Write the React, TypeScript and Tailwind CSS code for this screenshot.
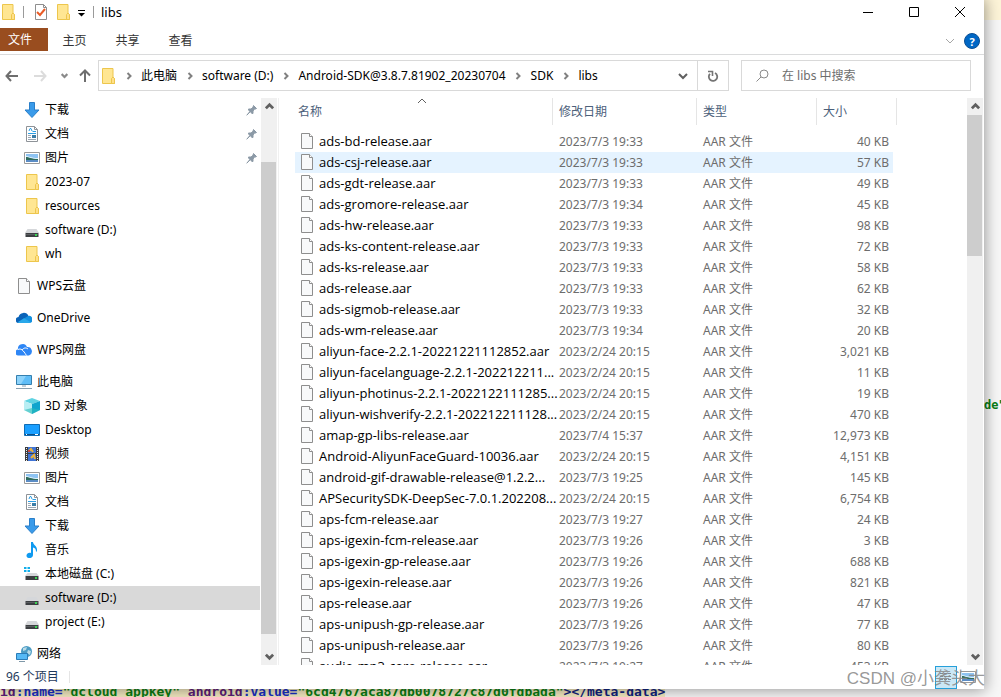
import type { ReactNode } from 'react';

const FolderIcon = () => (
  <svg width="16" height="16" viewBox="0 0 16 16" className="shrink-0" aria-hidden="true">
    <path d="M2.5 .5H13V9l1.5 1.5v5H2.5z" fill="#ffe692" stroke="#edc64c" />
    <path d="M11.5 15.5v-5l1.5-1.5 1.5 1.5v5z" fill="#ffe08a" stroke="#edc64c" />
  </svg>
);

const FileIcon = () => (
  <svg width="16" height="16" viewBox="0 0 16 16" className="shrink-0" aria-hidden="true">
    <path d="M2.5 .5h8l3 3v12h-11z" fill="#f8f9fa" stroke="#8e8e8e" />
    <path d="M10.5 .5v3h3" fill="#fff" stroke="#8e8e8e" />
  </svg>
);

const DocumentIcon = () => (
  <svg width="16" height="16" viewBox="0 0 16 16" className="shrink-0" aria-hidden="true">
    <path d="M2.5 .5h8l3 3v12h-11z" fill="#fff" stroke="#8e9398" />
    <path d="M10.5 .5v3h3" fill="none" stroke="#8e9398" />
    <path d="M5 5l1-2.5h1L8 5M8.5 5.500H12M4 7.500h8" fill="none" stroke="#2d9fe5" />
    <path d="M4 9.500h3M4 11.500h3M4 13.500h8" stroke="#9aa7b4" />
    <path d="M8 9h4v3H8z" fill="#3b7ea8" />
  </svg>
);

const DownloadIcon = () => (
  <svg width="16" height="16" viewBox="0 0 16 16" className="shrink-0" aria-hidden="true">
    <path d="M5.500 .5h5v7.500h4.500L8 15.500 1 8h4.500z" fill="#3a9bea" stroke="#2a7fc9" />
  </svg>
);

const PictureIcon = () => (
  <svg width="16" height="16" viewBox="0 0 16 16" className="shrink-0" aria-hidden="true">
    <path d="M.5 2.500h15v11H.5z" fill="#fff" stroke="#9a9a9a" />
    <path d="M2 4h12v4H2z" fill="#8ec3f2" />
    <path d="M2 6c3 0 5 2 12 2v1H2z" fill="#dceffb" />
    <path d="M2 7c3 0 5 2 12 2v1H2z" fill="#2f6b5c" />
    <path d="M2 10h12v2H2z" fill="#5b8cc4" />
  </svg>
);

const DriveIcon = () => (
  <svg width="16" height="16" viewBox="0 0 16 16" className="shrink-0" aria-hidden="true">
    <path d="M3.500 7h9L15 11H1z" fill="#d5d7da" />
    <path d="M1.500 11h13v4h-13z" fill="#3c3f42" />
    <path d="M2 12h12v1H2z" fill="#5a5d60" />
    <path d="M11 12h2v2h-2z" fill="#39d353" />
  </svg>
);

const SystemDriveIcon = () => (
  <svg width="16" height="16" viewBox="0 0 16 16" className="shrink-0" aria-hidden="true">
    <path d="M0 1h2.500v2H0zM3.500 1H6v2H3.500zM0 4h2.500v2H0zM3.500 4H6v2H3.500z" fill="#12aeea" />
    <path d="M3.500 7h9L15 10H1z" fill="#d5d7da" />
    <path d="M1.500 10h13v4h-13z" fill="#3c3f42" />
    <path d="M11 11h2v2h-2z" fill="#39d353" />
  </svg>
);

const OneDriveIcon = () => (
  <svg width="16" height="16" viewBox="0 0 16 16" className="shrink-0" aria-hidden="true">
    <path d="M3 13a3 3 0 0 1-.5-6A5.300 5.300 0 0 1 12.500 6L8 13z" fill="#0a63b8" />
    <path d="M8 8.500L12 6a3.500 3.500 0 0 1 2 6.800H3.500z" fill="#1490df" />
    <path d="M1.500 12.300L8 8.300l7 4-1 .7H3z" fill="#29a8ea" />
  </svg>
);

const WpsCloudIcon = () => (
  <svg width="16" height="16" viewBox="0 0 16 16" className="shrink-0" aria-hidden="true">
    <path d="M3 13.500A3 3 0 0 1 2 7.500 4.700 4.700 0 0 1 11 5a4.400 4.400 0 0 1 2 8.500z" fill="#2e86f5" />
    <path d="M2 7.500C5 6 7 8 10.500 13.500M6 8c2-2.500 4-2.500 6-1" fill="none" stroke="#fff" />
  </svg>
);

const ComputerIcon = () => (
  <svg width="16" height="16" viewBox="0 0 16 16" className="shrink-0" aria-hidden="true">
    <path d="M.5 1.500h15v9H.5z" fill="#5fbdf7" stroke="#357fae" />
    <path d="M1 2h9l-5 8H1z" fill="#8dd3fb" />
    <path d="M6 12h4M0 14.500h16" stroke="#8aa0b0" />
  </svg>
);

const CubeIcon = () => (
  <svg width="16" height="16" viewBox="0 0 16 16" className="shrink-0" aria-hidden="true">
    <path d="M8 0l8 3-8 3-8-3z" fill="#5fd3e2" />
    <path d="M0 3l8 3v10l-8-4z" fill="#b9eef3" />
    <path d="M16 3L8 6v10l8-4z" fill="#10a5cd" />
    <path d="M8 10l8 2-8 4-8-4z" fill="#2bbcbb" opacity=".6" />
  </svg>
);

const DesktopIcon = () => (
  <svg width="16" height="16" viewBox="0 0 16 16" className="shrink-0" aria-hidden="true">
    <path d="M.5 2.500h15v11H.5z" fill="#1a9fff" stroke="#0f6db5" />
    <path d="M1 12.500h14" stroke="#0b4f88" />
    <path d="M2 12.500h1M11 12.500h3" stroke="#fff" />
  </svg>
);

const VideoIcon = () => (
  <svg width="16" height="16" viewBox="0 0 16 16" className="shrink-0" aria-hidden="true">
    <path d="M1 1h14v14H1z" fill="#3d3d3d" />
    <path d="M4 1h8v6H4zM4 8h8v7H4z" fill="#3f74d6" />
    <path d="M2.500 2v13M13.500 2v13" stroke="#eee" strokeDasharray="1 1" />
    <path d="M5 5l2-2 2 3M7 12l3-3 1 4" fill="none" stroke="#e9b23c" strokeWidth="2" />
    <path d="M4 4h2v2H4z" fill="#c5473f" />
  </svg>
);

const MusicIcon = () => (
  <svg width="16" height="16" viewBox="0 0 16 16" className="shrink-0" aria-hidden="true">
    <path d="M7 0h2c0 3 4.500 4 4 8.500-.3 1-1 1.500-1 1.500 0-3-1-4-3-4.500V13c0 4-7 4-6.500.5C2.800 11 5 10.300 7 11z" fill="#0f9af0" />
  </svg>
);

const NetworkIcon = () => (
  <svg width="16" height="16" viewBox="0 0 16 16" className="shrink-0" aria-hidden="true">
    <circle cx="10.500" cy="5.500" r="5.500" fill="#4c9cc4" />
    <path d="M7 2l4-1-1 3-3 1zM12 4l3 1-1 4-3-2z" fill="#b9dbe8" />
    <path d="M.5 7.500h11v6H.5z" fill="#55b9f5" stroke="#2a7cb8" />
    <path d="M3 15.500h6" stroke="#7f98a8" />
  </svg>
);

const PinIcon = () => (
  <svg width="12" height="12" viewBox="0 0 12 12" className="mr-0.5 ml-auto shrink-0" aria-hidden="true">
    <path d="M7.500 1.500l3 3-1 .5-.8-.2L7 7v2l-.5 1L4.300 7.700.8 11.200 4 7.400 2 5.500l1-.5h2l2-1.700z" fill="#8b99a6" stroke="#8b99a6" />
  </svg>
);

type ChevronProps = { dir: 'up' | 'down' | 'right'; size?: number; color?: string; weight?: number };

const chevronPaths = {
  up: 'M1 7l4-4 4 4',
  down: 'M1 3l4 4 4-4',
  right: 'M3.500 2l3 3-3 3',
};

const Chevron = ({ dir, size = 10, color = '#606060', weight = 2 }: ChevronProps) => (
  <svg width={size} height={size} viewBox="0 0 10 10" className="shrink-0" aria-hidden="true">
    <path d={chevronPaths[dir]} fill="none" stroke={color} strokeWidth={weight} />
  </svg>
);

type NavItem = { name: string; icon: ReactNode; level?: number; pinned?: boolean; selected?: boolean };

const navGroups: NavItem[][] = [
  [
    { name: '下载', icon: <DownloadIcon />, level: 1, pinned: true },
    { name: '文档', icon: <DocumentIcon />, level: 1, pinned: true },
    { name: '图片', icon: <PictureIcon />, level: 1, pinned: true },
    { name: '2023-07', icon: <FolderIcon />, level: 1 },
    { name: 'resources', icon: <FolderIcon />, level: 1 },
    { name: 'software (D:)', icon: <DriveIcon />, level: 1 },
    { name: 'wh', icon: <FolderIcon />, level: 1 },
  ],
  [{ name: 'WPS云盘', icon: <FileIcon /> }],
  [{ name: 'OneDrive', icon: <OneDriveIcon /> }],
  [{ name: 'WPS网盘', icon: <WpsCloudIcon /> }],
  [
    { name: '此电脑', icon: <ComputerIcon /> },
    { name: '3D 对象', icon: <CubeIcon />, level: 1 },
    { name: 'Desktop', icon: <DesktopIcon />, level: 1 },
    { name: '视频', icon: <VideoIcon />, level: 1 },
    { name: '图片', icon: <PictureIcon />, level: 1 },
    { name: '文档', icon: <DocumentIcon />, level: 1 },
    { name: '下载', icon: <DownloadIcon />, level: 1 },
    { name: '音乐', icon: <MusicIcon />, level: 1 },
    { name: '本地磁盘 (C:)', icon: <SystemDriveIcon />, level: 1 },
    { name: 'software (D:)', icon: <DriveIcon />, level: 1, selected: true },
    { name: 'project (E:)', icon: <DriveIcon />, level: 1 },
  ],
  [{ name: '网络', icon: <NetworkIcon /> }],
];

const files = [
  { name: 'ads-bd-release.aar', date: '2023/7/3 19:33', size: '40 KB' },
  { name: 'ads-csj-release.aar', date: '2023/7/3 19:33', size: '57 KB', hovered: true },
  { name: 'ads-gdt-release.aar', date: '2023/7/3 19:33', size: '49 KB' },
  { name: 'ads-gromore-release.aar', date: '2023/7/3 19:34', size: '45 KB' },
  { name: 'ads-hw-release.aar', date: '2023/7/3 19:33', size: '98 KB' },
  { name: 'ads-ks-content-release.aar', date: '2023/7/3 19:33', size: '72 KB' },
  { name: 'ads-ks-release.aar', date: '2023/7/3 19:33', size: '58 KB' },
  { name: 'ads-release.aar', date: '2023/7/3 19:33', size: '62 KB' },
  { name: 'ads-sigmob-release.aar', date: '2023/7/3 19:33', size: '32 KB' },
  { name: 'ads-wm-release.aar', date: '2023/7/3 19:34', size: '20 KB' },
  { name: 'aliyun-face-2.2.1-20221221112852.aar', date: '2023/2/24 20:15', size: '3,021 KB' },
  { name: 'aliyun-facelanguage-2.2.1-202212211...', date: '2023/2/24 20:15', size: '11 KB' },
  { name: 'aliyun-photinus-2.2.1-2022122111285...', date: '2023/2/24 20:15', size: '19 KB' },
  { name: 'aliyun-wishverify-2.2.1-202212211128...', date: '2023/2/24 20:15', size: '470 KB' },
  { name: 'amap-gp-libs-release.aar', date: '2023/7/4 15:37', size: '12,973 KB' },
  { name: 'Android-AliyunFaceGuard-10036.aar', date: '2023/2/24 20:15', size: '4,151 KB' },
  { name: 'android-gif-drawable-release@1.2.2...', date: '2023/7/3 19:25', size: '145 KB' },
  { name: 'APSecuritySDK-DeepSec-7.0.1.202208...', date: '2023/2/24 20:15', size: '6,754 KB' },
  { name: 'aps-fcm-release.aar', date: '2023/7/3 19:27', size: '24 KB' },
  { name: 'aps-igexin-fcm-release.aar', date: '2023/7/3 19:26', size: '3 KB' },
  { name: 'aps-igexin-gp-release.aar', date: '2023/7/3 19:26', size: '688 KB' },
  { name: 'aps-igexin-release.aar', date: '2023/7/3 19:26', size: '821 KB' },
  { name: 'aps-release.aar', date: '2023/7/3 19:26', size: '47 KB' },
  { name: 'aps-unipush-gp-release.aar', date: '2023/7/3 19:26', size: '77 KB' },
  { name: 'aps-unipush-release.aar', date: '2023/7/3 19:26', size: '80 KB' },
  { name: 'audio-mp3-core-release.aar', date: '2023/7/3 19:27', size: '453 KB' },
];

const crumbs = ['此电脑', 'software (D:)', 'Android-SDK@3.8.7.81902_20230704', 'SDK', 'libs'];

const TitleBar = () => (
  <header className="flex h-7 shrink-0 items-start justify-between pr-px">
    <div className="flex h-6 items-center">
      <FolderIcon />
      <span className="ml-[7px] h-3 w-px bg-[#9a9a9a]" />
      <button aria-label="属性" className="ml-2">
        <svg width="16" height="16" viewBox="0 0 16 16" aria-hidden="true">
          <path d="M3.500 .5h8l3 3v12h-11z" fill="#fff" stroke="#8e8e8e" />
          <path d="M11.500 .5v3h3" fill="none" stroke="#8e8e8e" />
          <path d="M5 8l3 3 5-6" fill="none" stroke="#ea5b26" strokeWidth="2" />
        </svg>
      </button>
      <button aria-label="新建文件夹" className="ml-[7px]">
        <FolderIcon />
      </button>
      <button aria-label="自定义快速访问工具栏" className="ml-1">
        <svg width="12" height="12" viewBox="0 0 12 12" aria-hidden="true">
          <path d="M3 4.500h7" stroke="#000" />
          <path d="M3 7h7L6.500 10.500z" fill="#000" />
        </svg>
      </button>
      <span className="ml-[6px] h-3 w-px bg-[#9a9a9a]" />
      <h1 className="ml-[7px] text-[13px] leading-none">libs</h1>
    </div>
    <div className="flex h-6">
      <button aria-label="最小化" className="flex w-[46px] items-center justify-center">
        <svg width="10" height="10" viewBox="0 0 10 10"><path d="M0 5.500h10" stroke="#000" /></svg>
      </button>
      <button aria-label="最大化" className="flex w-[46px] items-center justify-center">
        <svg width="10" height="10" viewBox="0 0 10 10"><path d="M.5 .5h9v9h-9z" fill="none" stroke="#000" /></svg>
      </button>
      <button aria-label="关闭" className="flex w-[46px] items-center justify-center">
        <svg width="10" height="10" viewBox="0 0 10 10"><path d="M0 0l10 10M10 0L0 10" stroke="#000" /></svg>
      </button>
    </div>
  </header>
);

const Ribbon = () => (
  <div className="flex h-[27px] shrink-0 items-start border-b border-[#dadbdc]">
    <button className="h-[23px] w-12 bg-[#994d1f] pr-2 text-white">文件</button>
    {['主页', '共享', '查看'].map((tab) => (
      <button key={tab} className="h-[25px] w-[53px] text-[#333]">
        {tab}
      </button>
    ))}
    <div className="ml-auto flex h-[26px] items-center gap-[9px] pr-1">
      <button aria-label="展开功能区">
        <Chevron dir="down" color="#a6a6a6" weight={1} />
      </button>
      <button
        aria-label="帮助"
        className="flex size-4 items-center justify-center rounded-full border border-[#0b4f94] bg-[#0067c5] text-[11px] leading-none font-bold text-white"
      >
        ?
      </button>
    </div>
  </div>
);

const AddressBar = () => (
  <div className="mt-[5px] flex h-[31px] shrink-0 items-center pr-[13px]">
    <div className="flex w-[98px] items-center">
      <button aria-label="后退" className="ml-[5px]">
        <svg width="13" height="12" viewBox="0 0 13 12"><path d="M13 6H1.500M6 1L1.500 6 6 11" fill="none" stroke="#6e6e6e" strokeWidth="2" /></svg>
      </button>
      <button aria-label="前进" className="ml-4">
        <svg width="13" height="12" viewBox="0 0 13 12"><path d="M0 6h11.500M7 1l4.500 5L7 11" fill="none" stroke="#dcdcdc" strokeWidth="2" /></svg>
      </button>
      <button aria-label="最近浏览的位置" className="ml-[14px]">
        <Chevron dir="down" size={7} color="#8a8a8a" weight={3} />
      </button>
      <button aria-label="上移" className="ml-[11px]">
        <svg width="12" height="13" viewBox="0 0 12 13"><path d="M6 13V1.500M1 6.500l5-5 5 5" fill="none" stroke="#6e6e6e" strokeWidth="2" /></svg>
      </button>
    </div>
    <nav className="flex h-full min-w-0 flex-1 items-center border border-[#d9d9d9] pl-px" aria-label="地址">
      <FolderIcon />
      {crumbs.map((crumb) => (
        <span key={crumb} className="flex items-center whitespace-nowrap">
          <span className="flex w-[25px] justify-center">
            <Chevron dir="right" color="#808080" />
          </span>
          <a href="#">{crumb}</a>
        </span>
      ))}
      <button aria-label="以前的位置" className="ml-auto flex h-full w-[29px] items-center justify-center">
        <Chevron dir="down" />
      </button>
      <button
        aria-label="刷新"
        className="flex h-full w-[31px] items-center justify-center border-l border-[#d9d9d9]"
      >
        <svg width="12" height="12" viewBox="0 0 12 12" aria-hidden="true">
          <path d="M3 3.800A4.200 4.200 0 1 0 8 3" fill="none" stroke="#757575" strokeWidth="1.800" />
          <path d="M1 1.500h4.500V6" fill="none" stroke="#757575" strokeWidth="1.600" />
        </svg>
      </button>
    </nav>
    <label className="ml-3 flex h-full w-[230px] items-center border border-[#d9d9d9] pl-[14px]">
      <svg width="13" height="13" viewBox="0 0 13 13" className="shrink-0" aria-hidden="true">
        <circle cx="8" cy="5" r="4" fill="none" stroke="#8a8a8a" />
        <path d="M5 8l-4.500 4.500" stroke="#8a8a8a" />
      </svg>
      <input
        type="text"
        aria-label="搜索"
        placeholder="在 libs 中搜索"
        className="ml-[13px] w-full min-w-0 outline-none placeholder:text-[#6d6d6d]"
      />
    </label>
  </div>
);

const NavPane = () => (
  <nav className="w-[261px] shrink-0 overflow-hidden" aria-label="导航窗格">
    <ul className="flex flex-col gap-2">
      {navGroups.map((group, i) => (
        <li key={i}>
          <ul>
            {group.map((item) => (
              <li key={item.name} className={`mr-px h-6 ${item.selected ? 'bg-[#d9d9d9]' : ''}`}>
                <a href="#" className={`flex h-full items-center gap-[5px] ${item.level ? 'pl-6' : 'pl-4'}`}>
                  {item.icon}
                  <span>{item.name}</span>
                  {item.pinned && <PinIcon />}
                </a>
              </li>
            ))}
          </ul>
        </li>
      ))}
    </ul>
  </nav>
);

const ScrollBar = ({ offset, thumb }: { offset: number; thumb: number }) => (
  <div className="flex w-4 shrink-0 flex-col items-stretch bg-[#f0f0f0]">
    <button aria-label="向上滚动" className="flex h-[17px] shrink-0 items-center justify-center">
      <Chevron dir="up" size={9} weight={3} />
    </button>
    <div className="flex-1 pr-px">
      <div className="bg-[#cdcdcd]" style={{ marginTop: offset, height: thumb }} />
    </div>
    <button aria-label="向下滚动" className="flex h-[17px] shrink-0 items-center justify-center">
      <Chevron dir="down" size={9} weight={3} />
    </button>
  </div>
);

const FileList = () => (
  <main className="min-w-0 flex-1 overflow-hidden pl-4">
    <table className="w-[602px] table-fixed border-separate border-spacing-0">
      <colgroup>
        <col className="w-[258px]" />
        <col className="w-36" />
        <col className="w-[120px]" />
        <col className="w-20" />
      </colgroup>
      <thead>
        <tr className="text-left text-[#4c607a]">
          <th className="p-0 pb-[6px] font-normal">
            <div className="relative flex h-[27px] items-center border-r border-[#e5e5e5] pl-[3px]">
              名称
              <span className="absolute top-0 left-[122px] -mt-0.5">
                <Chevron dir="up" weight={1} />
              </span>
            </div>
          </th>
          {['修改日期', '类型', '大小'].map((title) => (
            <th key={title} className="p-0 pb-[6px] font-normal">
              <div className="flex h-[27px] items-center border-r border-[#e5e5e5] pl-[6px]">{title}</div>
            </th>
          ))}
        </tr>
      </thead>
      <tbody>
        {files.map((file) => (
          <tr key={file.name} className={`h-[21px] leading-5 text-[#6d6d6d] ${file.hovered ? 'bg-[#e5f3ff]' : ''}`}>
            <td className="p-0 pl-1 align-top font-['Open_Sans',sans-serif] text-[13px] text-black">
              <span className="flex items-center gap-1 whitespace-nowrap">
                <FileIcon />
                {file.name}
              </span>
            </td>
            <td className="p-0 pl-[6px]">{file.date}</td>
            <td className="p-0 pl-[6px]">AAR 文件</td>
            <td className="border-r-4 border-white p-0 pr-1 text-right">{file.size}</td>
          </tr>
        ))}
      </tbody>
    </table>
  </main>
);

const StatusBar = () => (
  <footer className="flex h-6 shrink-0 items-center justify-between pl-[6px] text-[#1e395b]">
    <div className="flex items-center">
      96 个项目
      <span className="ml-[10px] h-3 w-px bg-[#e5e5e5]" />
    </div>
    <div className="flex h-full items-center pr-2">
      <button
        aria-label="详细信息"
        className="flex h-[23px] w-[22px] items-center justify-center border border-[#26a0da] bg-[#cbe8f6]"
      >
        <svg width="12" height="10" viewBox="0 0 12 10"><path d="M0 1.500h12M0 4.500h12M0 7.500h12" stroke="#7e8b94" strokeDasharray="3 1" /></svg>
      </button>
      <button aria-label="大缩略图" className="ml-[3px]">
        <PictureIcon />
      </button>
    </div>
  </footer>
);

export default function App() {
  return (
    <div className="relative flex h-screen flex-col overflow-hidden bg-[#f7f7f7] font-['Noto_Sans','Noto_Sans_CJK_SC',sans-serif] text-xs text-black">
      <div className="flex min-h-0 flex-1">
        <div className="relative z-10 flex min-w-0 flex-1 flex-col bg-white shadow-[0_0_14px_1px_rgba(0,0,0,0.4)]">
          <TitleBar />
          <Ribbon />
          <AddressBar />
          <div className="mt-[7px] flex min-h-0 flex-1">
            <NavPane />
            <ScrollBar offset={47} thumb={472} />
            <div className="ml-px flex min-w-0 flex-1 border-l border-[#f0f0f0]">
              <FileList />
              <ScrollBar offset={0} thumb={141} />
            </div>
            <div className="w-px" />
          </div>
          <StatusBar />
        </div>
        <aside className="w-[17px] shrink-0 overflow-hidden">
          <div className="h-5 bg-[#fdf4d8]" />
          <code className="mt-[377px] block font-['DejaVu_Sans_Mono',monospace] text-xs font-bold text-[#0a7d14]">
            de"
          </code>
        </aside>
      </div>
      <div className="flex h-2 shrink-0 items-end overflow-hidden">
        <pre className="bg-[#f3e9c0] font-['DejaVu_Sans_Mono',monospace] text-[13px] leading-[10px] font-bold text-[#0a7d14]">
          <span className="text-[#5c1b78]">id</span>
          <span className="text-[#1a2fc4]">:name=</span>"dcloud_appkey" <span className="text-[#5c1b78]">android</span>
          <span className="text-[#1a2fc4]">:value=</span>"6cd4767aca87db0078727c87d0fdbada"
          <span className="text-[#10227e]">&gt;&lt;/meta-data&gt;</span>
        </pre>
      </div>
      <p className="absolute right-4 bottom-2 z-20 font-['Liberation_Sans','Noto_Sans_CJK_SC',sans-serif] text-[17px] leading-5 text-[#8c8c8c]/90">
        CSDN @小龚头大
      </p>
    </div>
  );
}
